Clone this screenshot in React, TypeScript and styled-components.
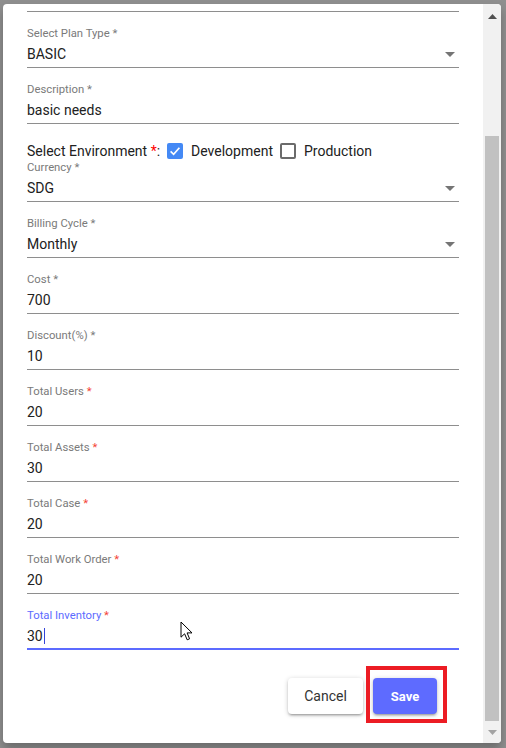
import React from 'react'
import styled, { createGlobalStyle } from 'styled-components'

const GlobalStyle = createGlobalStyle`
  html, body {
    margin: 0;
    padding: 0;
    background: #8f8f8f;
  }
  body {
    font-family: Roboto, 'Liberation Sans', sans-serif;
  }
`

type FieldProps = {
  label: string
  value: string
  select?: boolean
  redMark?: boolean
  focused?: boolean
  tight?: boolean
  caret?: boolean
}

const Field: React.FC<FieldProps> = ({ label, value, select, redMark, focused, tight, caret }) => {
  return (
    <StyledField $tight={tight}>
      <StyledLabel $focused={focused}>
        {label} <StyledMark $red={redMark}>*</StyledMark>
      </StyledLabel>
      <StyledInput $focused={focused}>
        <StyledValue>
          {value}
          {caret && <StyledCaret />}
        </StyledValue>
        {select && (
          <StyledArrow viewBox="0 0 10 5">
            <path d="M0 0h10L5 5z" />
          </StyledArrow>
        )}
      </StyledInput>
    </StyledField>
  )
}

const Checkbox: React.FC<{ checked?: boolean }> = ({ checked }) => {
  return (
    <StyledCheckbox $checked={checked}>
      {checked && (
        <svg width="16" height="16" viewBox="0 0 16 16">
          <polyline points="3.6,8.4 6.6,11.3 12.4,4.8" fill="none" stroke="#fff" strokeWidth="1.7" />
        </svg>
      )}
    </StyledCheckbox>
  )
}

const App: React.FC = () => {
  return (
    <StyledPage>
      <GlobalStyle />
      <StyledDialog>
        <StyledContent>
          <StyledBody>
            {/* underline of the field scrolled out of view above */}
            <StyledTopRule />
            <Field label="Select Plan Type" value="BASIC" select />
            <Field label="Description" value="basic needs" />
            <StyledEnvRow>
              <StyledEnvTitle>
                Select Environment <StyledMark $red $strong>*</StyledMark>:
              </StyledEnvTitle>
              <Checkbox checked />
              <StyledCheckLabel>Development</StyledCheckLabel>
              <Checkbox />
              <StyledCheckLabel>Production</StyledCheckLabel>
            </StyledEnvRow>
            <Field label="Currency" value="SDG" select tight />
            <Field label="Billing Cycle" value="Monthly" select />
            <Field label="Cost" value="700" />
            <Field label="Discount(%)" value="10" />
            <Field label="Total Users" value="20" redMark />
            <Field label="Total Assets" value="30" redMark />
            <Field label="Total Case" value="20" redMark />
            <Field label="Total Work Order" value="20" redMark />
            <Field label="Total Inventory" value="30" redMark focused caret />
            <StyledActions>
              <StyledCancel>Cancel</StyledCancel>
              <StyledSaveWrap>
                <StyledSave>Save</StyledSave>
              </StyledSaveWrap>
            </StyledActions>
          </StyledBody>
        </StyledContent>

        <StyledScrollbar>
          <StyledScrollButton $up>
            <svg width="9" height="5" viewBox="0 0 9 5">
              <path d="M0 5L4.5 0L9 5z" fill="#505050" />
            </svg>
          </StyledScrollButton>
          <StyledTrack>
            <StyledThumb />
          </StyledTrack>
          <StyledScrollButton>
            <svg width="9" height="5" viewBox="0 0 9 5">
              <path d="M0 0h9L4.5 5z" fill="#a3a3a3" />
            </svg>
          </StyledScrollButton>
        </StyledScrollbar>

        <StyledPointer width="13" height="20" viewBox="0 0 13 20">
          <path
            d="M1 1L1 16.2L4.6 12.8L7.2 18.8L9.6 17.8L7.1 11.9L12 11.9Z"
            fill="#fff"
            stroke="#000"
            strokeWidth="1"
            strokeLinejoin="round"
          />
        </StyledPointer>
      </StyledDialog>
    </StyledPage>
  )
}

const StyledPage = styled.div`
  width: 506px;
  height: 748px;
  box-sizing: border-box;
  padding: 4px 5px 5px 3px;
  background: #8f8f8f;
  overflow: hidden;
`
const StyledDialog = styled.div`
  position: relative;
  display: flex;
  width: 498px;
  height: 739px;
  background: #fff;
  border-radius: 4px;
  overflow: hidden;
  box-shadow: 0 6px 10px rgba(0, 0, 0, 0.25);
`
const StyledContent = styled.div`
  flex: 1;
  min-width: 0;
  display: flex;
  flex-direction: column;
  justify-content: flex-end;
  overflow: hidden;
  padding: 0 24px;
`
const StyledBody = styled.div`
  flex-shrink: 0;
`
const StyledTopRule = styled.div`
  border-bottom: 1px solid #8e8e8e;
`
const StyledField = styled.div<{ $tight?: boolean }>`
  margin-top: ${(p) => (p.$tight ? '0' : '15px')};
`
const StyledLabel = styled.div<{ $focused?: boolean }>`
  font-size: 11.3px;
  line-height: 14px;
  margin-bottom: 3px;
  color: ${(p) => (p.$focused ? '#5c6bff' : '#7a7a7a')};
  white-space: nowrap;
`
const StyledMark = styled.span<{ $red?: boolean; $strong?: boolean }>`
  color: ${(p) => (p.$strong ? '#ff0000' : p.$red ? '#f44336' : 'inherit')};
`
const StyledInput = styled.div<{ $focused?: boolean }>`
  display: flex;
  align-items: center;
  padding-bottom: 3px;
  border-bottom: 1px solid ${(p) => (p.$focused ? '#5c6bff' : '#8e8e8e')};
  box-shadow: ${(p) => (p.$focused ? 'inset 0 -1px 0 #5c6bff' : 'none')};
`
const StyledValue = styled.div`
  flex: 1;
  font-size: 14px;
  line-height: 20px;
  color: #212121;
  white-space: nowrap;
`
const StyledCaret = styled.span`
  display: inline-block;
  width: 1px;
  height: 16px;
  margin-left: 1px;
  vertical-align: -3px;
  background: #3444d8;
`
const StyledArrow = styled.svg`
  width: 10px;
  height: 5px;
  margin-right: 4px;
  fill: #757575;
`
const StyledEnvRow = styled.div`
  display: flex;
  align-items: center;
  height: 20px;
  margin-top: 17px;
  font-size: 14px;
  color: #212121;
  white-space: nowrap;
`
const StyledEnvTitle = styled.span`
  margin-right: 7px;
`
const StyledCheckLabel = styled.span`
  margin: 0 7px 0 8px;
`
const StyledCheckbox = styled.span<{ $checked?: boolean }>`
  display: inline-flex;
  width: 16px;
  height: 16px;
  box-sizing: border-box;
  border-radius: 2px;
  background: ${(p) => (p.$checked ? '#4489f5' : '#fff')};
  border: ${(p) => (p.$checked ? 'none' : '2px solid #6b6b6b')};
`
const StyledActions = styled.div`
  display: flex;
  justify-content: flex-end;
  align-items: center;
  gap: 10px;
  margin-top: 28px;
  padding: 0 22px 29px 0;
`
const StyledCancel = styled.button`
  width: 75px;
  height: 36px;
  border: none;
  border-radius: 4px;
  background: #fff;
  color: #333;
  font-family: Roboto, 'Liberation Sans', sans-serif;
  font-size: 14px;
  cursor: pointer;
  box-shadow: 0 1px 5px rgba(0, 0, 0, 0.2), 0 2px 2px rgba(0, 0, 0, 0.14), 0 3px 1px -2px rgba(0, 0, 0, 0.12);
`
const StyledSaveWrap = styled.div`
  position: relative;
  display: flex;
  &::after {
    content: '';
    position: absolute;
    left: -7px;
    top: -12px;
    right: -10px;
    bottom: -9px;
    border: 4px solid #ec1c24;
    pointer-events: none;
  }
`
const StyledSave = styled.button`
  width: 64px;
  height: 36px;
  border: none;
  border-radius: 4px;
  background: #5e6bff;
  color: #fff;
  font-family: Roboto, 'Liberation Sans', sans-serif;
  font-size: 13px;
  font-weight: bold;
  cursor: pointer;
  box-shadow: 0 1px 5px rgba(0, 0, 0, 0.2), 0 2px 2px rgba(0, 0, 0, 0.14), 0 3px 1px -2px rgba(0, 0, 0, 0.12);
`
const StyledScrollbar = styled.div`
  width: 18px;
  flex-shrink: 0;
  display: flex;
  flex-direction: column;
  background: #f1f1f1;
`
const StyledScrollButton = styled.div<{ $up?: boolean }>`
  height: 22px;
  display: flex;
  justify-content: center;
  align-items: center;
  padding-top: ${(p) => (p.$up ? '3px' : '0')};
  box-sizing: border-box;
`
const StyledTrack = styled.div`
  flex: 1;
  display: flex;
  flex-direction: column;
  justify-content: flex-end;
  padding: 0 2px;
`
const StyledThumb = styled.div`
  height: 84.2%;
  background: #c1c1c1;
`
const StyledPointer = styled.svg`
  position: absolute;
  left: 177px;
  top: 617px;
`

export default App
